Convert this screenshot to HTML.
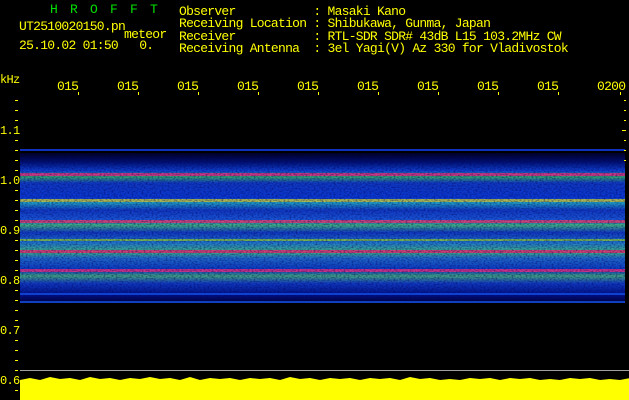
<!DOCTYPE html>
<html><head><meta charset="utf-8"><style>
body{margin:0;width:629px;height:400px;background:#000;overflow:hidden;position:relative;font-family:"Liberation Mono",monospace}
.t{position:absolute;color:#ffff00;font-size:13px;line-height:13px;white-space:pre;letter-spacing:-0.73px}
.g{color:#00e000}
.k{position:absolute;color:#ffff00;font-size:13px;line-height:13px;letter-spacing:-0.73px;top:80px}
</style></head><body>
<div class="t g" style="left:50px;top:3px;letter-spacing:12.2px">HROFFT</div>
<div class="t" style="left:19px;top:20px">UT2510020150.pn</div>
<div class="t" style="left:124px;top:28px">meteor</div>
<div class="t" style="left:19px;top:39px">25.10.02 01:50   0.</div>
<div class="t" style="left:179px;top:6px;line-height:12.3px">Observer           : Masaki Kano
Receiving Location : Shibukawa, Gunma, Japan
Receiver           : RTL-SDR SDR# 43dB L15 103.2MHz CW
Receiving Antenna  : 3el Yagi(V) Az 330 for Vladivostok</div>
<div class="t" style="left:0;top:74px;font-size:12px">kHz</div>
<svg width="629" height="400" style="position:absolute;left:0;top:0">
<defs>
<linearGradient id="b" x1="0" y1="0" x2="0" y2="1">
<stop offset="0" stop-color="#000020"/>
<stop offset="0.06" stop-color="#001070"/>
<stop offset="0.12" stop-color="#1040d0"/>
<stop offset="0.16" stop-color="#30a070"/>
<stop offset="0.2" stop-color="#1038c0"/>
<stop offset="0.3" stop-color="#0a38d0"/>
<stop offset="0.33" stop-color="#20a0c0"/>
<stop offset="0.38" stop-color="#1038c0"/>
<stop offset="0.45" stop-color="#1a58d8"/>
<stop offset="0.48" stop-color="#40b080"/>
<stop offset="0.53" stop-color="#1038c0"/>
<stop offset="0.6" stop-color="#2078c8"/>
<stop offset="0.66" stop-color="#40b080"/>
<stop offset="0.7" stop-color="#2068c8"/>
<stop offset="0.78" stop-color="#0a38c0"/>
<stop offset="0.82" stop-color="#40a080"/>
<stop offset="0.87" stop-color="#1038c0"/>
<stop offset="0.95" stop-color="#001080"/>
<stop offset="1" stop-color="#000030"/>
</linearGradient>
<filter id="n" x="0" y="0" width="1" height="1" filterUnits="objectBoundingBox"><feTurbulence type="fractalNoise" baseFrequency="0.5 0.7" numOctaves="1" seed="3"/><feColorMatrix values="0 0 0 0 0  0 0 0 0 0  0 0 0 0 0.1  0 0 0 2 -0.8"/></filter>
</defs>
<rect x="20" y="149" width="605" height="2" fill="#1030c0"/>
<rect x="20" y="153" width="605" height="150" fill="url(#b)"/>
<g opacity="0.85">
<rect x="20" y="173" width="605" height="3" fill="#e03080"/>
<rect x="20" y="199" width="605" height="3" fill="#c0c040"/>
<rect x="20" y="220" width="605" height="3" fill="#e04070"/>
<rect x="20" y="239" width="605" height="2" fill="#80c040"/>
<rect x="20" y="250" width="605" height="3" fill="#e03070"/>
<rect x="20" y="269" width="605" height="3" fill="#e03080"/>
</g>
<rect x="20" y="153" width="605" height="150" filter="url(#n)" opacity="0.6"/>
<rect x="20" y="293" width="605" height="2" fill="#1040d0"/>
<rect x="20" y="301" width="605" height="2" fill="#1040c0"/>
<rect x="20" y="370" width="609" height="1" fill="#a0a0a0"/>
<path d="M20 400V380l10-2 10 2 10-3 10 2 10-1 10 2 10-3 10 2 10-1 10 2 10-2 10 1 10-2 10 2 10-1 10 2 10-3 10 3 10-2 10 1 10-1 10 2 10-2 10 1 10-1 10 2 10-3 10 2 10-1 10 2 10-2 10 1 10-1 10 2 10-2 10 1 10-1 10 2 10-3 10 2 10-1 10 2 10-1 10 1 10-2 10 1 10-1 10 2 10-2 10 1 10-1 10 2 10-1 10 1 10-2 10 1 10-1 10 2 10-1 10 1 10-2 9 1V400z" fill="#ffff00"/>
<g fill="#ffff00">
<rect x="15" y="100" width="3" height="1"/><rect x="15" y="110" width="3" height="1"/><rect x="15" y="120" width="3" height="1"/><rect x="15" y="140" width="3" height="1"/><rect x="15" y="150" width="3" height="1"/><rect x="15" y="160" width="3" height="1"/><rect x="15" y="170" width="3" height="1"/><rect x="15" y="190" width="3" height="1"/><rect x="15" y="200" width="3" height="1"/><rect x="15" y="210" width="3" height="1"/><rect x="15" y="220" width="3" height="1"/><rect x="15" y="240" width="3" height="1"/><rect x="15" y="250" width="3" height="1"/><rect x="15" y="260" width="3" height="1"/><rect x="15" y="270" width="3" height="1"/><rect x="15" y="290" width="3" height="1"/><rect x="15" y="300" width="3" height="1"/><rect x="15" y="310" width="3" height="1"/><rect x="15" y="320" width="3" height="1"/><rect x="15" y="340" width="3" height="1"/><rect x="15" y="350" width="3" height="1"/><rect x="15" y="360" width="3" height="1"/><rect x="15" y="370" width="3" height="1"/><rect x="15" y="390" width="3" height="1"/>
<rect x="624" y="100" width="2" height="1"/><rect x="624" y="110" width="2" height="1"/><rect x="624" y="120" width="2" height="1"/><rect x="622" y="130" width="4" height="1"/><rect x="624" y="140" width="2" height="1"/><rect x="624" y="150" width="2" height="1"/><rect x="624" y="160" width="2" height="1"/>
<rect x="78" y="92" width="1" height="3"/><rect x="138" y="92" width="1" height="3"/><rect x="198" y="92" width="1" height="3"/><rect x="258" y="92" width="1" height="3"/><rect x="318" y="92" width="1" height="3"/><rect x="378" y="92" width="1" height="3"/><rect x="438" y="92" width="1" height="3"/><rect x="498" y="92" width="1" height="3"/><rect x="558" y="92" width="1" height="3"/><rect x="620" y="92" width="1" height="3"/>
</g>
</svg>
<div class="t" style="left:0;top:125px;font-size:12px">1.1</div>
<div class="t" style="left:0;top:175px;font-size:12px">1.0</div>
<div class="t" style="left:0;top:225px;font-size:12px">0.9</div>
<div class="t" style="left:0;top:275px;font-size:12px">0.8</div>
<div class="t" style="left:0;top:325px;font-size:12px">0.7</div>
<div class="t" style="left:0;top:375px;font-size:12px">0.6</div>
<div class="k" style="left:57px">015</div><div class="k" style="left:117px">015</div><div class="k" style="left:177px">015</div><div class="k" style="left:237px">015</div><div class="k" style="left:297px">015</div><div class="k" style="left:357px">015</div><div class="k" style="left:417px">015</div><div class="k" style="left:477px">015</div><div class="k" style="left:537px">015</div><div class="k" style="left:597px">0200</div>
</body></html>
